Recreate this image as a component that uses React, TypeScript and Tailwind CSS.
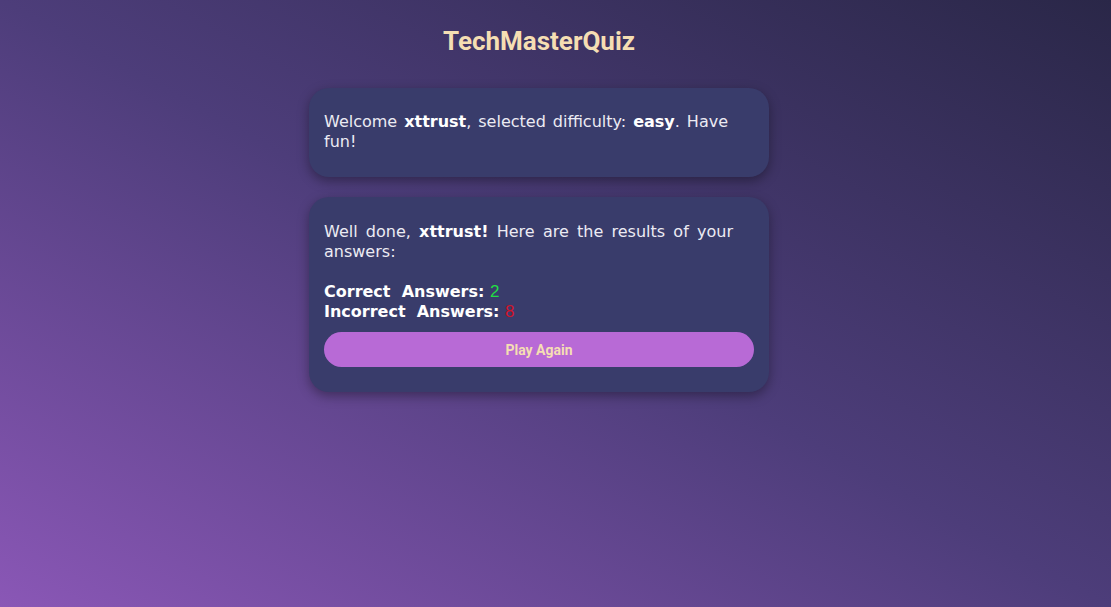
export default function App() {
	return (
		<div className="min-h-[607px] w-full bg-[linear-gradient(to_top_right,#8a57b6,#4d3d7a_50%,#2a2748)] flex flex-col items-center pr-[33px] font-['DejaVu_Sans',sans-serif]">
			<h1 className="mt-[26px] text-[26px] leading-[30px] font-bold text-[#f5deb3] font-['Roboto',sans-serif]">
				TechMasterQuiz
			</h1>
			<div className="mt-[32px] w-[460px] rounded-[20px] bg-[#393c6b] shadow-[0_4px_12px_rgba(0,0,0,0.35)] px-[15px] pt-[24px] pb-[25px] text-[16px] leading-[20px] text-[#ecebf3] text-justify">
				<p className="pr-[26px]">
					Welcome <b className="text-white">xttrust</b>, selected difficulty: <b className="text-white">easy</b>. Have fun!
				</p>
			</div>
			<div className="mt-[20px] w-[460px] rounded-[20px] bg-[#393c6b] shadow-[0_4px_12px_rgba(0,0,0,0.35)] px-[15px] pt-[25px] pb-[25px] text-[16px] leading-[20px] text-[#ecebf3]">
				<p className="text-justify pr-[21px]">
					Well done, <b className="text-white">xttrust!</b> Here are the results of your answers:
				</p>
				<div className="mt-[20px] font-bold text-white">
					<div>
						Correct&nbsp; Answers: <span className="font-normal text-[#22dd44] font-['Liberation_Sans',sans-serif] text-[17px]">2</span>
					</div>
					<div>
						Incorrect&nbsp; Answers: <span className="font-normal text-[#d0142a] font-['Liberation_Sans',sans-serif] text-[17px]">8</span>
					</div>
				</div>
				<button className="mt-[10px] w-full h-[35px] rounded-full bg-[#b86ad6] text-[#f5deb3] text-[14px] font-bold font-['Roboto',sans-serif]">
					Play Again
				</button>
			</div>
		</div>
	);
}
